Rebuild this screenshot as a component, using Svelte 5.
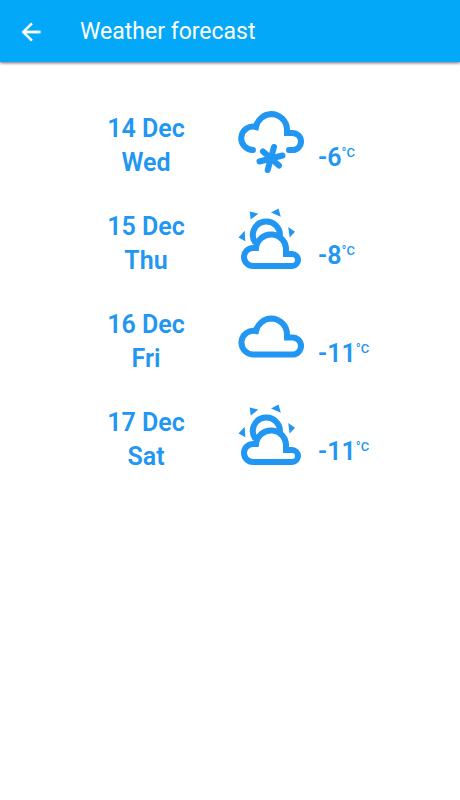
<script lang="ts">
  type Icon = "snow" | "partly" | "cloud";

  const days: Array<{ date: string; weekday: string; icon: Icon; temp: number }> = [
    { date: "14 Dec", weekday: "Wed", icon: "snow", temp: -6 },
    { date: "15 Dec", weekday: "Thu", icon: "partly", temp: -8 },
    { date: "16 Dec", weekday: "Fri", icon: "cloud", temp: -11 },
    { date: "17 Dec", weekday: "Sat", icon: "partly", temp: -11 },
  ];
</script>

<header class="bar">
  <button class="bar__back" type="button" aria-label="Back">
    <svg viewBox="0 0 24 24" width="28" height="28" aria-hidden="true">
      <path d="M20 11H7.83l5.59-5.59L12 4l-8 8 8 8 1.41-1.41L7.83 13H20v-2z" fill="currentColor" stroke="currentColor" stroke-width="0.3" />
    </svg>
  </button>
  <h1 class="bar__title">Weather forecast</h1>
</header>

<main>
  <ul class="forecast">
    {#each days as day}
      <li class="day">
        <div class="day__date">
          <span>{day.date}</span>
          <span>{day.weekday}</span>
        </div>
        <svg class="day__icon" viewBox="0 0 80 80" aria-hidden="true">
          {#if day.icon === "snow"}
            <path class="line" d="M23 49A11.7 11.7 0 1 1 26 26A16 16 0 0 1 41 13A16 16 0 0 1 57 29V32H62.5A8.5 8.5 0 0 1 62.5 49H59" />
            <path class="line" d="M44 46L37.7 69M29.5 60.5L52.5 54.5M33 50.5L49 64.5" />
          {:else if day.icon === "partly"}
            <path class="line line--butt" d="M25.5 44A13.5 13.5 0 1 1 49.5 39" />
            <path class="line" d="M23 67A9 9 0 0 1 23 49H26A15 15 0 0 1 56 52V55H62A6 6 0 0 1 62 67Z" />
            <path class="ray" d="M19.700 12.500L28.300 14.700L20.700 20.500ZM41 13.500L48.500 9.500L50.800 17.800ZM8.500 38.500L14.700 31.800L15.300 42.300ZM58.200 28L65 32.700L59.700 38.500Z" />
          {:else}
            <path class="line" d="M23 57.5A11.9 11.9 0 1 1 26 34A16 16 0 0 1 41 21.5A16 16 0 0 1 57 37.5V40.5H62.5A8.5 8.5 0 0 1 62.5 57.5Z" />
          {/if}
        </svg>
        <div class="day__temp">{day.temp}<sup>°C</sup></div>
      </li>
    {/each}
  </ul>
</main>

<style>
  :global(body) {
    background: #fff;
    font-family: Roboto, sans-serif;
  }

  .bar {
    display: flex;
    align-items: center;
    height: 60px;
    padding: 2px 17px 0;
    gap: 35px;
    background: #03a9f8;
    color: #fff;
    box-shadow: 0 1px 3px rgba(0, 0, 0, 0.6);
  }

  .bar__back {
    display: flex;
    padding: 0;
    border: 0;
    background: none;
    color: inherit;
    cursor: pointer;
  }

  .bar__title {
    margin: 0;
    font-size: 23px;
    font-weight: 400;
    line-height: 32px;
  }

  .forecast {
    display: flex;
    flex-direction: column;
    gap: 18px;
    margin: 0;
    padding: 39px 0 0 20%;
    list-style: none;
  }

  .day {
    display: grid;
    grid-template-columns: 108px 110px 1fr;
    color: #2196f3;
    font-size: 25px;
    font-weight: 600;
    line-height: 34px;
  }

  .day__date {
    display: flex;
    flex-direction: column;
    align-items: center;
    padding-top: 11px;
  }

  .day__icon {
    width: 80px;
    height: 80px;
    margin-left: 30px;
  }

  .line {
    fill: none;
    stroke: currentColor;
    stroke-width: 6;
    stroke-linecap: round;
  }

  .line--butt {
    stroke-linecap: butt;
  }

  .ray {
    fill: currentColor;
  }

  .day__temp {
    padding: 40px 0 0 8px;
  }

  sup {
    font-size: 13px;
    font-weight: 500;
    line-height: 1;
    vertical-align: 9px;
  }
</style>
